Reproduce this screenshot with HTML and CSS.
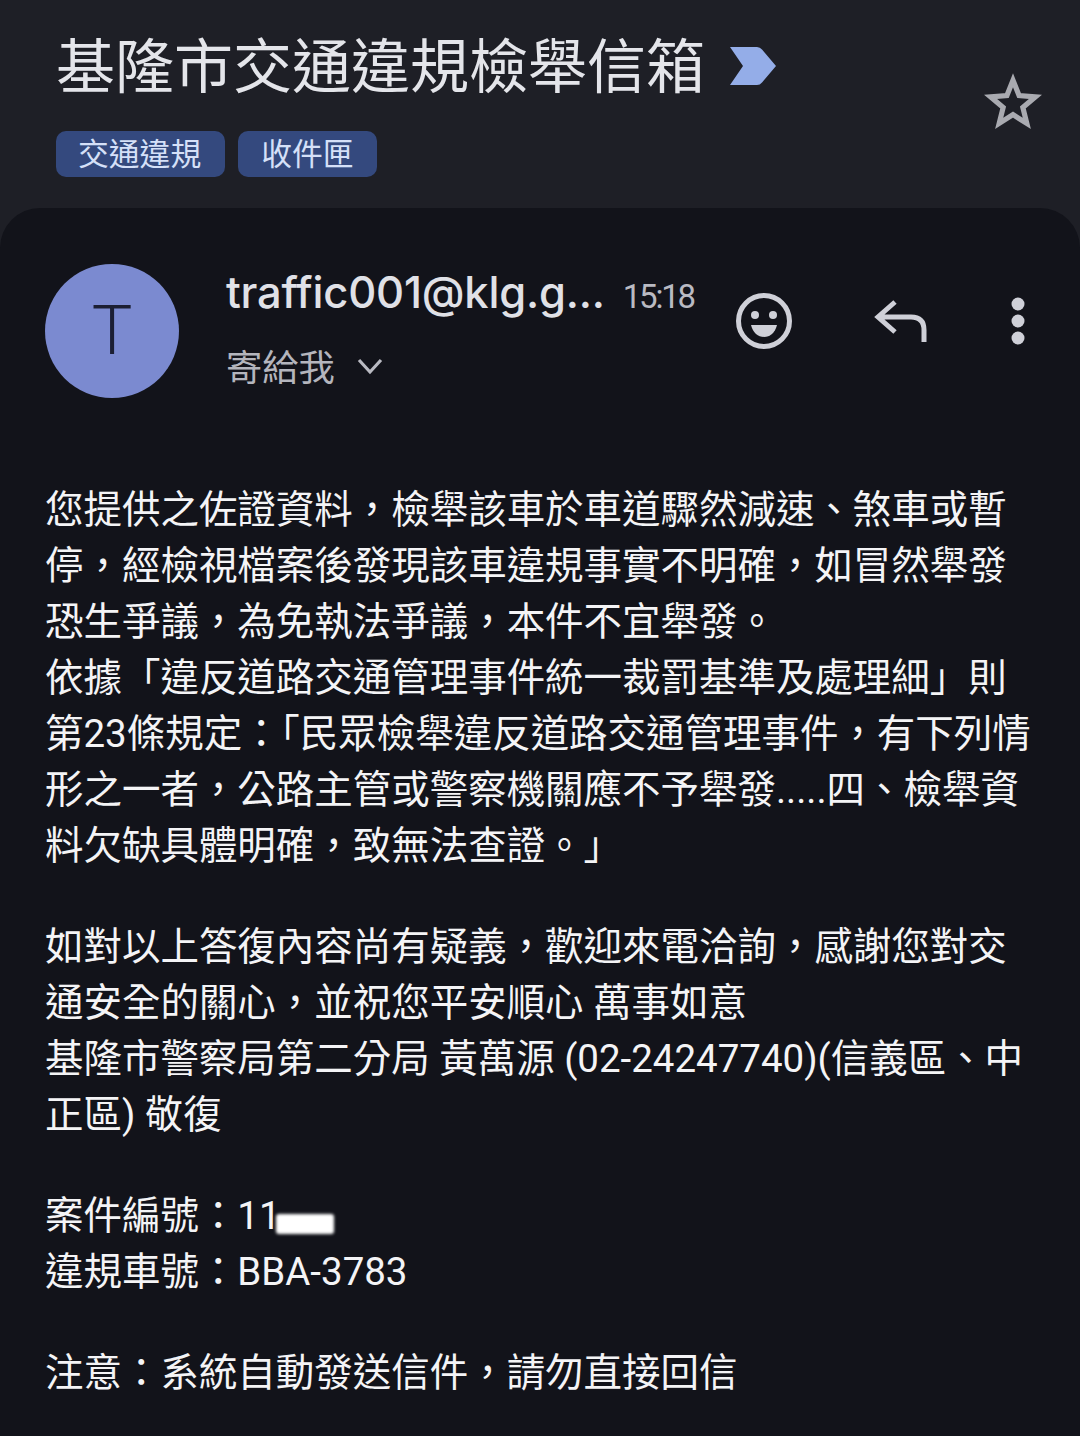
FILE: index.html
```html
<!DOCTYPE html>
<html lang="zh-Hant">
<head>
<meta charset="utf-8">
<title>基隆市交通違規檢舉信箱</title>
<link rel="stylesheet" href="styles.css">
</head>
<body>
<div class="page">
  <header class="head">
    <div class="head-main">
      <div class="title-row">
        <h1 class="title">基隆市交通違規檢舉信箱</h1>
        <svg class="marker" viewBox="0 0 48 40" width="48" height="40"><path d="M1 1H28Q31 1 33 3.500L47 20L33 36.500Q31 39 28 39H1L14 20Z" fill="#94ade8"/></svg>
      </div>
      <div class="tags">
        <span class="tag">交通違規</span>
        <span class="tag tag-short">收件匣</span>
      </div>
    </div>
    <svg class="star" viewBox="0 0 24 24" width="62" height="62"><path d="M12 3.600 14.350 9.500 20.700 10 15.800 14.100 17.350 20.300 12 16.900 6.650 20.300 8.200 14.100 3.300 10 9.650 9.500Z" fill="none" stroke="#a9aab0" stroke-width="2" stroke-linejoin="miter"/></svg>
  </header>
  <main class="card">
    <section class="sender">
      <div class="avatar">T</div>
      <div class="who">
        <div class="who-top">
          <span class="name">traffic001@klg.g...</span>
          <span class="time">15:18</span>
        </div>
        <div class="who-bottom">
          <span class="to">寄給我</span>
          <svg class="chev" viewBox="0 0 28 20" width="28" height="20"><path d="M3 4 14 16 25 4" fill="none" stroke="#b9bac2" stroke-width="3.200"/></svg>
        </div>
      </div>
      <div class="actions">
        <svg class="smile" viewBox="0 0 58 58" width="58" height="58">
          <circle cx="29" cy="29" r="25.500" fill="none" stroke="#cfd0d8" stroke-width="5"/>
          <circle cx="20" cy="23" r="4" fill="#cfd0d8"/>
          <circle cx="38" cy="23" r="4" fill="#cfd0d8"/>
          <path d="M16 33H42C40 41 35 45 29 45S18 41 16 33Z" fill="#cfd0d8"/>
        </svg>
        <svg class="reply" viewBox="0 0 54 44" width="54" height="44"><path d="M21 3 4 18 21 33M4 18H37Q50 18 50 31V43" fill="none" stroke="#cfd0d8" stroke-width="5"/></svg>
        <svg class="more" viewBox="0 0 16 48" width="16" height="48"><circle cx="8" cy="7" r="6.500" fill="#cfd0d8"/><circle cx="8" cy="24" r="6.500" fill="#cfd0d8"/><circle cx="8" cy="41" r="6.500" fill="#cfd0d8"/></svg>
      </div>
    </section>
    <article class="body">
      <p>您提供之佐證資料，檢舉該車於車道驟然減速、煞車或暫<br>停，經檢視檔案後發現該車違規事實不明確，如冒然舉發<br>恐生爭議，為免執法爭議，本件不宜舉發。<br>依據「違反道路交通管理事件統一裁罰基準及處理細」則<br>第23條規定：「民眾檢舉違反道路交通管理事件，有下列情<br>形之一者，公路主管或警察機關應不予舉發.....四、檢舉資<br>料欠缺具體明確，致無法查證。」</p>
      <p>如對以上答復內容尚有疑義，歡迎來電洽詢，感謝您對交<br>通安全的關心，並祝您平安順心 萬事如意<br>基隆市警察局第二分局 黃萬源 (02-24247740)(信義區、中<br>正區) 敬復</p>
      <p>案件編號：11<span class="redact"></span><br>違規車號：BBA-3783</p>
      <p>注意：系統自動發送信件，請勿直接回信</p>
    </article>
  </main>
</div>
</body>
</html>
```
FILE: styles.css
```css
* { box-sizing: border-box; }
html, body { margin: 0; padding: 0; background: #1e1f26; }
.page {
  width: 1080px;
  height: 1436px;
  overflow: hidden;
  display: flex;
  flex-direction: column;
  font-family: Roboto, "Noto Sans CJK TC", sans-serif;
}
.head {
  height: 208px;
  flex: none;
  display: flex;
  justify-content: space-between;
  padding: 27px 36px 0 56px;
}
.title-row { display: flex; align-items: center; gap: 24px; height: 72px; }
.title {
  margin: 0;
  font-family: "Noto Sans CJK TC", sans-serif;
  font-size: 59px;
  font-weight: 400;
  line-height: 72px;
  color: #e4e5ea;
}
.marker { margin-top: 6px; }
.tags { display: flex; gap: 13px; margin-top: 32px; }
.tag {
  height: 46px;
  padding: 0 24px 0 22px;
  border-radius: 10px;
  background: #34497e;
  color: #d5e0f8;
  font-size: 30.800px;
  line-height: 42px;
  font-family: "Noto Sans CJK TC", sans-serif;
}
.tag-short { padding: 0 23px; }
.star { margin-top: 44px; flex: none; }
.card {
  flex: 1;
  background: #12131a;
  border-radius: 40px 40px 0 0;
  padding: 56px 0 0 45px;
}
.sender { display: flex; align-items: flex-start; }
.avatar {
  width: 134px;
  height: 134px;
  flex: none;
  border-radius: 50%;
  background: #7b8ad0;
  color: #1c1f33;
  font-size: 68px;
  font-weight: 300;
  line-height: 134px;
  text-align: center;
}
.who { margin-left: 47px; width: 480px; flex: none; }
.who-top { display: flex; align-items: baseline; gap: 18px; height: 56px; }
.name {
  font-family: Inter, sans-serif;
  font-size: 43.500px;
  font-weight: 500;
  line-height: 56px;
  letter-spacing: -0.200px;
  color: #e0e1e7;
  white-space: nowrap;
}
.time { font-size: 33px; letter-spacing: -2.200px; color: #b9bac2; white-space: nowrap; }
.who-bottom { display: flex; align-items: center; gap: 21px; margin-top: 19px; height: 52px; }
.to {
  font-family: "Noto Sans CJK TC", sans-serif;
  font-size: 36.300px;
  line-height: 52px;
  color: #b4b5bd;
}
.chev { flex: none; margin-top: 2px; }
.actions { display: flex; align-items: center; margin-left: 29px; margin-top: 28px; height: 58px; }
.reply { margin-left: 81px; }
.more { margin-left: 82px; }
.body {
  margin-top: 84px;
  width: 1020px;
  font-family: Roboto, "Noto Sans CJK TC", sans-serif;
  font-size: 38.480px;
  line-height: 56px;
  color: #f4f4f6;
  white-space: nowrap;
}
.body p { margin: 0 0 45px; }
.redact {
  display: inline-block;
  width: 58px;
  height: 20px;
  margin-left: -5px;
  background: #ffffff;
  border-radius: 3px;
  filter: blur(1.500px);
  vertical-align: -5px;
}
```
